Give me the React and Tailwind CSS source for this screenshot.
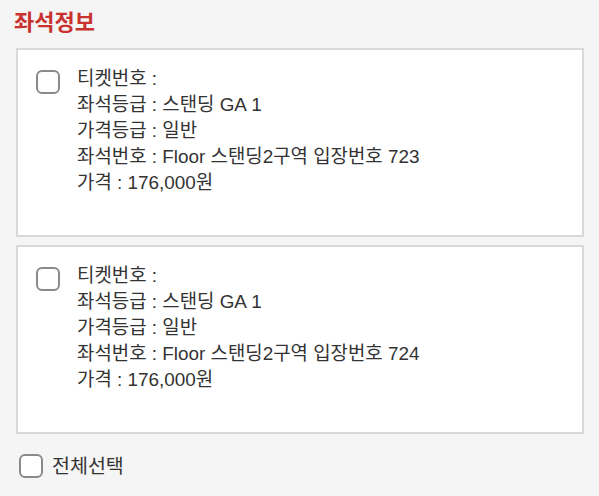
import { useState } from 'react';

const seats = [
  { id: 1, grade: '스탠딩 GA 1', price: '일반', no: 'Floor 스탠딩2구역 입장번호 723', amount: '176,000원' },
  { id: 2, grade: '스탠딩 GA 1', price: '일반', no: 'Floor 스탠딩2구역 입장번호 724', amount: '176,000원' },
];

function Box({ checked, onClick }) {
  return (
    <button
      type="button"
      onClick={onClick}
      className={
        'h-6 w-6 shrink-0 rounded-[6px] border-2 ' +
        (checked ? 'border-[#c8322f] bg-[#c8322f]' : 'border-[#8a8a8a] bg-white')
      }
    />
  );
}

export default function App() {
  const [sel, setSel] = useState([]);
  const toggle = (id) =>
    setSel((s) => (s.includes(id) ? s.filter((x) => x !== id) : [...s, id]));
  const all = sel.length === seats.length;

  return (
    <div
      className="min-h-[496px] w-[599px] bg-[#f5f5f5] px-4 pt-[7px] text-[#333]"
      style={{ fontFamily: '"Liberation Sans", "Noto Sans CJK KR", sans-serif' }}
    >
      <h1 className="-ml-[2px] text-[22px] font-bold leading-[32px] text-[#c8322f]">좌석정보</h1>
      <div className="mt-[9px] flex flex-col gap-[8px]">
        {seats.map((s) => (
          <div
            key={s.id}
            className="flex h-[189px] w-[568px] gap-[17px] border-2 border-[#d9d9d9] bg-white pl-[18px] pt-[20px]"
          >
            <Box checked={sel.includes(s.id)} onClick={() => toggle(s.id)} />
            <div className="-mt-[4px] text-[18.9px] leading-[26px]">
              <p>티켓번호 :</p>
              <p>좌석등급 : {s.grade}</p>
              <p>가격등급 : {s.price}</p>
              <p>좌석번호 : {s.no}</p>
              <p>가격 : {s.amount}</p>
            </div>
          </div>
        ))}
      </div>
      <label className="mt-[19px] flex items-center gap-[9px] pl-[3px]">
        <Box checked={all} onClick={() => setSel(all ? [] : seats.map((s) => s.id))} />
        <span className="text-[19.5px] leading-[26px]">전체선택</span>
      </label>
    </div>
  );
}
